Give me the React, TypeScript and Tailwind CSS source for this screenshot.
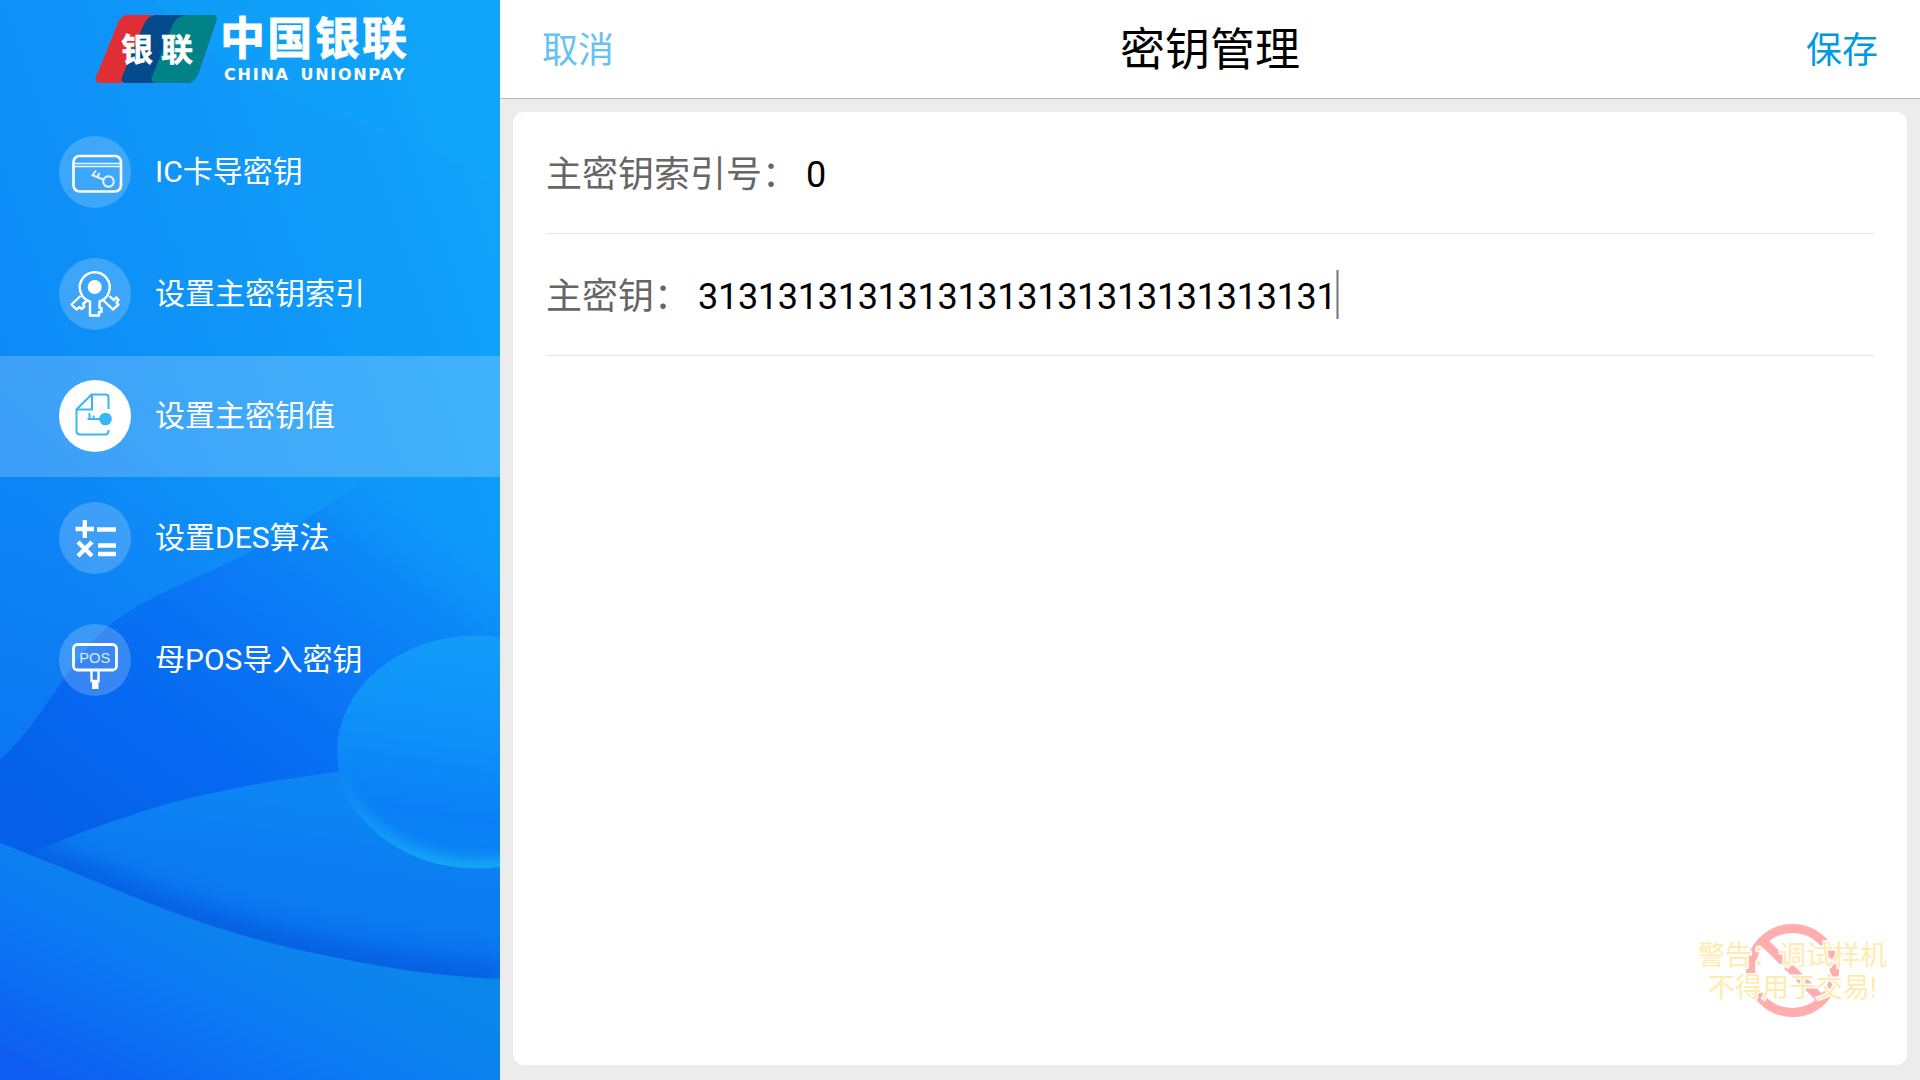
import type { ReactNode } from "react";

const HILL_FRONT = "M0 843C60 866 110 888 167 910C225 932 280 947 333 957C390 969 440 976 500 979V1080H0Z";
const HILL_BACK = "M33 852C75 834 120 818 167 804C220 790 280 779 337 772C400 764 450 761 500 760V990H300Z";

function Backdrop() {
  return (
    <svg className="absolute inset-0 h-full w-full" viewBox="0 0 500 1080" preserveAspectRatio="none" aria-hidden="true">
      <defs>
        <linearGradient id="sky" gradientUnits="userSpaceOnUse" x1="0" y1="420" x2="500" y2="240">
          <stop offset="0" stopColor="#0d89f7" />
          <stop offset="0.5" stopColor="#0f96f8" />
          <stop offset="1" stopColor="#11a2fa" />
        </linearGradient>
        <linearGradient id="lowSky" gradientUnits="userSpaceOnUse" x1="120" y1="430" x2="0" y2="760">
          <stop offset="0" stopColor="#0f7bf4" stopOpacity="0" />
          <stop offset="1" stopColor="#0a74f0" stopOpacity="0.9" />
        </linearGradient>
        <linearGradient id="valley" gradientUnits="userSpaceOnUse" x1="90" y1="850" x2="370" y2="470">
          <stop offset="0" stopColor="#055fe8" />
          <stop offset="0.3" stopColor="#0668f1" />
          <stop offset="0.6" stopColor="#0a77f5" />
          <stop offset="0.85" stopColor="#0c88f7" stopOpacity="0.9" />
          <stop offset="1" stopColor="#0d93f8" stopOpacity="0.300" />
        </linearGradient>
        <linearGradient id="back" gradientUnits="userSpaceOnUse" x1="250" y1="782" x2="225" y2="945">
          <stop offset="0" stopColor="#0d86f4" />
          <stop offset="0.35" stopColor="#0c7ff2" />
          <stop offset="1" stopColor="#0b74ee" />
        </linearGradient>
        <linearGradient id="front" gradientUnits="userSpaceOnUse" x1="270" y1="905" x2="150" y2="1140">
          <stop offset="0" stopColor="#0b86ea" />
          <stop offset="0.3" stopColor="#0c7ff1" />
          <stop offset="0.6" stopColor="#0c72f3" />
          <stop offset="1" stopColor="#0e5cf0" />
        </linearGradient>
        <linearGradient id="orb" x1="0.7" y1="0" x2="0.5" y2="1">
          <stop offset="0" stopColor="#139df9" />
          <stop offset="0.4" stopColor="#0f93f9" />
          <stop offset="0.8" stopColor="#0b80f6" />
          <stop offset="1" stopColor="#0b85f6" />
        </linearGradient>
        <linearGradient id="rim" x1="0" y1="0" x2="0" y2="1">
          <stop offset="0.55" stopColor="#16a8f4" stopOpacity="0" />
          <stop offset="1" stopColor="#16a8f4" />
        </linearGradient>
        <clipPath id="backClip"><path d={HILL_BACK} /></clipPath>
        <clipPath id="orbClip"><ellipse cx="477" cy="752" rx="140" ry="116.500" /></clipPath>
        <filter id="soft" x="-20%" y="-40%" width="140%" height="180%" colorInterpolationFilters="sRGB"><feGaussianBlur stdDeviation="11" /></filter>
        <filter id="soft2" x="-20%" y="-20%" width="140%" height="140%" colorInterpolationFilters="sRGB"><feGaussianBlur stdDeviation="6" /></filter>
      </defs>
      <rect width="500" height="1080" fill="url(#sky)" />
      <path d="M155 0C185 50 270 95 350 120C410 140 460 165 500 190V0Z" fill="#10a8fb" opacity="0.28" />
      <rect width="500" height="1080" fill="url(#lowSky)" />
      <path d="M0 760C30 732 45 705 63 680C80 657 88 645 100 634C135 600 190 582 240 557C280 535 330 505 370 477H500V1080H0Z" fill="url(#valley)" />
      <path d={HILL_BACK} fill="url(#back)" />
      <g clipPath="url(#backClip)">
        <path d="M0 843C60 866 110 888 167 910C225 932 280 947 333 957C390 969 440 976 500 979" fill="none" stroke="#0458dd" strokeWidth="34" opacity="0.7" filter="url(#soft)" />
      </g>
      <path d={HILL_FRONT} fill="url(#front)" />
      <ellipse cx="477" cy="752" rx="140" ry="116.500" fill="url(#orb)" />
      <g clipPath="url(#orbClip)">
        <ellipse cx="477" cy="752" rx="140" ry="116.500" fill="none" stroke="url(#rim)" strokeWidth="18" filter="url(#soft2)" />
      </g>
    </svg>
  );
}

function Logo() {
  return (
    <svg className="block h-[100px] w-[500px]" viewBox="0 0 500 100" role="img" aria-label="中国银联">
      <defs>
        <clipPath id="cards">
          <path d="M128 15H212Q218 15 216 21L198 74Q194 83 186 83H101Q94 83 96 77L118 23Q121 15 128 15Z" />
        </clipPath>
      </defs>
      <g clipPath="url(#cards)">
        <rect x="90" y="10" width="130" height="80" fill="#e02e35" />
        <path d="M158 15H220V83H127Q120 83 122 77L144 24Q148 15 158 15Z" fill="#024a8c" />
        <path d="M188 15H220V83H157Q150 83 152 77L173 24Q178 15 188 15Z" fill="#008286" />
      </g>
      <g fill="#fff" fontFamily="'Noto Sans CJK SC', sans-serif" fontWeight="700">
        <g stroke="#fff" strokeWidth="0.600" fontSize="32">
          <text x="121" y="60.500">银</text>
          <text x="161" y="60.500">联</text>
        </g>
        <text x="220" y="55" fontSize="45" stroke="#fff" strokeWidth="0.800" textLength="187" lengthAdjust="spacing">中国银联</text>
      </g>
      <g fill="#fff" fontFamily="'DejaVu Sans', sans-serif" fontWeight="700" fontSize="16">
        <text x="224" y="79.500" textLength="64" lengthAdjust="spacing">CHINA</text>
        <text x="300.500" y="79.500" textLength="104" lengthAdjust="spacing">UNIONPAY</text>
      </g>
    </svg>
  );
}

function Disc({ active = false, children }: { active?: boolean; children: ReactNode }) {
  return (
    <svg className="-mt-0.5 h-[72px] w-[72px] shrink-0" viewBox="0 0 72 72" fill="none" aria-hidden="true">
      <circle cx="36" cy="36" r="36" fill="#fff" fillOpacity={active ? 1 : 0.2} />
      {children}
    </svg>
  );
}

const CardIcon = () => (
  <Disc>
    <rect x="14.500" y="20" width="47.500" height="35.500" rx="6" stroke="#fff" strokeWidth="2.600" />
    <path d="M14.500 27.500H62M14.500 30.500H62" stroke="#fff" strokeOpacity="0.900" strokeWidth="1.600" />
    <g stroke="#fff" strokeOpacity="0.850" strokeWidth="2">
      <circle cx="49.500" cy="45.500" r="5.300" />
      <path d="M44.500 43.500L33.500 39.200L37 34.500M38.500 41L40.500 37" />
    </g>
  </Disc>
);

const KeysIcon = () => (
  <Disc>
    <g stroke="#fff" strokeWidth="2.400" strokeLinejoin="round">
      <path d="M31 43.500A15 15 0 1 1 40.500 43.500V50H42.500V54H40V57.500H31Z" />
      <path d="M21.500 38L12.500 46.500L17.500 51.500L20.500 49L22.500 51L25.500 48.500L24 46L28 42.500" />
      <path d="M50.500 38L54.500 42L57.500 39.500L59.500 42L57.500 44.500L59.500 46.500L54 51.500L44.500 42.500" />
    </g>
    <circle cx="35.700" cy="29" r="7" fill="#fff" />
  </Disc>
);

const FileKeyIcon = () => (
  <Disc active>
    <g stroke="#37b6fb" strokeWidth="2">
      <path d="M49.500 29V17.500Q49.500 14.500 46.500 14.500H32.500L17.500 29.500V51Q17.500 54.500 21 54.500H46.500Q49.500 54.500 49.500 50" />
      <path d="M33 15V29.500H18" />
      <path d="M28.500 39H41M30.500 39V33M34.500 39V35.500" />
    </g>
    <circle cx="46.500" cy="39" r="6.300" fill="#37b6fb" />
  </Disc>
);

const MathIcon = () => (
  <Disc>
    <path d="M16.500 27H35M25.800 18V36M38 27.500H57M39 43.500H57M39 52H57M19 40L33 54M33 40L19 54" stroke="#fff" strokeWidth="4.300" />
  </Disc>
);

const PosIcon = () => (
  <Disc>
    <rect x="14.500" y="20.500" width="43" height="25.500" rx="4" stroke="#fff" strokeWidth="2.800" />
    <text x="20.300" y="39" fill="#fff" fillOpacity="0.850" fontFamily="'Liberation Sans', sans-serif" fontSize="14" textLength="31" lengthAdjust="spacingAndGlyphs">POS</text>
    <path d="M32.500 46.500V57H39.500V46.500" stroke="#fff" strokeWidth="2.400" />
    <path d="M33 56H39.500V65H33Z" fill="#fff" />
  </Disc>
);

const MENU = [
  { label: "IC卡导密钥", icon: <CardIcon /> },
  { label: "设置主密钥索引", icon: <KeysIcon /> },
  { label: "设置主密钥值", icon: <FileKeyIcon />, active: true },
  { label: "设置DES算法", icon: <MathIcon /> },
  { label: "母POS导入密钥", icon: <PosIcon /> },
];

function Sidebar() {
  return (
    <aside className="relative h-full w-[500px] shrink-0 overflow-hidden">
      <Backdrop />
      <div className="relative">
        <Logo />
        <nav className="mt-3 flex flex-col">
          {MENU.map(({ label, icon, active }) => (
            <a
              key={label}
              className={`mb-px flex h-[121px] items-center gap-6 pl-[59px] text-[30px] leading-9 text-white ${active ? "bg-[#ffffff33]" : ""}`}
            >
              {icon}
              <span className="-mt-0.5">{label}</span>
            </a>
          ))}
        </nav>
      </div>
    </aside>
  );
}

function Field({ label, value, caret }: { label: string; value: string; caret?: boolean }) {
  return (
    <div className="flex h-[122px] items-center border-b border-[#e4e4e4] text-[36px] leading-[48px]">
      <span className="pt-1 text-[#666666]">{label}</span>
      <span className="ml-2 pt-1 tracking-[-0.28px] text-black">{value}</span>
      {caret && <span className="-ml-px h-[49px] w-[3px] border-x border-[#b4b4b4] bg-[#7c7c7c]" />}
    </div>
  );
}

function Warning() {
  return (
    <svg className="absolute right-[12px] top-[910px] h-[120px] w-[230px]" viewBox="0 0 230 120" role="img" aria-label="警告">
      <g stroke="#ffadad" fill="none" strokeWidth="9">
        <circle cx="114.500" cy="60.500" r="42" />
        <path d="M85 31L144 90" strokeWidth="9" />
      </g>
      <g fill="#ffebad" stroke="#fff" strokeWidth="3" paintOrder="stroke" fontSize="27" textAnchor="middle">
        <text x="114.500" y="55">警告：调试样机</text>
        <text x="114.500" y="87">不得用于交易!</text>
      </g>
    </svg>
  );
}

export default function App() {
  return (
    <div className="relative flex h-[1080px] w-[1920px] overflow-hidden bg-[#ececec] font-[Roboto,'Noto_Sans_CJK_SC',sans-serif]">
      <Sidebar />
      <div className="flex min-w-0 flex-1 flex-col">
        <header className="grid h-[99px] grid-cols-3 items-center border-b border-[#b8b8b8] bg-white px-[42px] pt-1">
          <button className="justify-self-start text-[36px] leading-[48px] text-[#66c2f2]">取消</button>
          <h1 className="justify-self-center text-[45px] leading-[60px] text-black">密钥管理</h1>
          <button className="justify-self-end text-[36px] leading-[48px] text-[#0099e5]">保存</button>
        </header>
        <main className="mx-[13px] mb-[15px] mt-[13px] flex-1 rounded-[11px] bg-white px-[33px]">
          <Field label="主密钥索引号：" value="0" />
          <Field label="主密钥：" value="31313131313131313131313131313131" caret />
        </main>
      </div>
      <Warning />
    </div>
  );
}
